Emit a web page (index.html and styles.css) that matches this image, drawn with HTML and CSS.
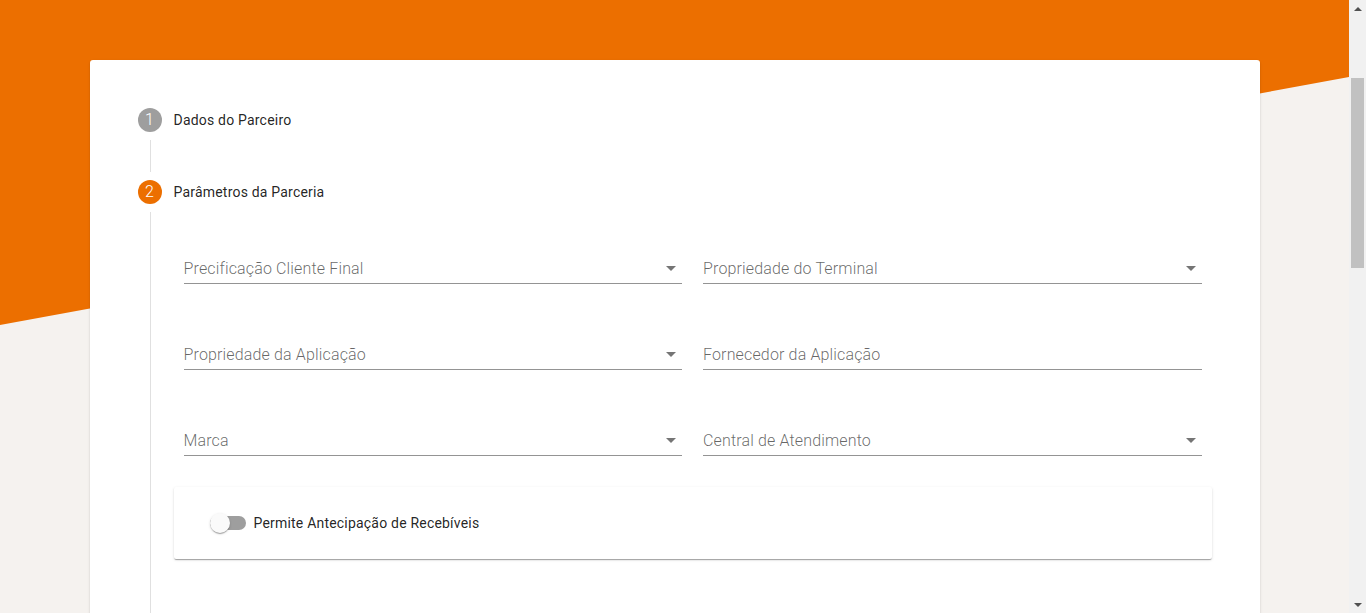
FILE: index.html
```html
<!DOCTYPE html>
<html lang="pt-BR">
<head>
<meta charset="utf-8">
<title>Parâmetros da Parceria</title>
<link rel="stylesheet" href="styles.css">
</head>
<body>
<div class="viewport">
  <div class="hero"></div>
  <main class="page">
    <section class="card">
      <div class="stepper">
        <div class="step-header first">
          <span class="step-icon done">1</span>
          <span class="step-label">Dados do Parceiro</span>
        </div>
        <div class="connector"></div>
        <div class="step-header second">
          <span class="step-icon active">2</span>
          <span class="step-label">Parâmetros da Parceria</span>
        </div>
        <div class="step-content">
          <div class="fields">
            <div class="field select"><span class="field-label">Precificação Cliente Final</span><span class="arrow"></span></div>
            <div class="field select"><span class="field-label">Propriedade do Terminal</span><span class="arrow"></span></div>
            <div class="field select"><span class="field-label">Propriedade da Aplicação</span><span class="arrow"></span></div>
            <div class="field"><span class="field-label">Fornecedor da Aplicação</span></div>
            <div class="field select"><span class="field-label">Marca</span><span class="arrow"></span></div>
            <div class="field select"><span class="field-label">Central de Atendimento</span><span class="arrow"></span></div>
          </div>
          <div class="toggle-card">
            <label class="toggle">
              <span class="toggle-bar"><span class="toggle-thumb"></span></span>
              <span class="toggle-label">Permite Antecipação de Recebíveis</span>
            </label>
          </div>
        </div>
      </div>
    </section>
  </main>
</div>
<div class="scrollbar">
  <span class="sb-btn"><span class="sb-up"></span></span>
  <span class="sb-track"><span class="sb-thumb"></span></span>
  <span class="sb-btn"><span class="sb-down"></span></span>
</div>
</body>
</html>
```
FILE: styles.css
```css
html, body {
  margin: 0;
  padding: 0;
}
body {
  background: #f5f2ef;
  font-family: Roboto, "Liberation Sans", Arial, sans-serif;
  color: rgba(0, 0, 0, 0.87);
}
.viewport {
  position: relative;
  margin-right: 17px;
}
.hero {
  position: absolute;
  top: 0;
  left: 0;
  right: 0;
  height: 325px;
  background: #ec6f00;
  clip-path: polygon(0 0, 100% 0, 100% 77px, 0 100%);
  z-index: 0;
}
.page {
  position: relative;
  z-index: 1;
  padding: 60px 0 28px;
}
.card {
  width: 1170px;
  margin: 0 auto;
  background: #fff;
  border-radius: 3px;
  box-shadow: 0 2px 1px -1px rgba(0,0,0,.2), 0 1px 1px 0 rgba(0,0,0,.14), 0 1px 3px 0 rgba(0,0,0,.12);
  min-height: 1780px;
  padding: 24px;
  box-sizing: border-box;
}
.stepper {
  display: flex;
  flex-direction: column;
}
.step-header {
  display: flex;
  align-items: center;
  padding: 24px 24px 8px;
  height: 24px;
}
.step-header.second {
  padding: 8px 24px 8px;
}
.step-icon {
  width: 24px;
  height: 24px;
  border-radius: 50%;
  color: #fff;
  font-size: 16px;
  font-weight: 300;
  line-height: 24px;
  text-align: center;
  flex: none;
}
.step-icon.done { background: #9e9e9e; }
.step-icon.active { background: #ec6f00; }
.step-label {
  margin-left: 12px;
  font-size: 14px;
  letter-spacing: 0.2px;
  color: rgba(0, 0, 0, 0.87);
}
.connector {
  margin-left: 36px;
  height: 32px;
  border-left: 1px solid #e0e0e0;
}
.step-content {
  margin-left: 36px;
  border-left: 1px solid #e0e0e0;
  padding: 0 24px 24px 23px;
  min-height: 1500px;
}
.fields {
  display: grid;
  grid-template-columns: 1fr 1fr;
  column-gap: 21px;
  row-gap: 61px;
  padding: 0 10px;
  margin-top: 47px;
}
.field {
  display: flex;
  align-items: center;
  height: 20px;
  padding-bottom: 4px;
  border-bottom: 1px solid #949494;
}
.field-label {
  flex: 1;
  font-size: 16px;
  font-weight: 300;
  letter-spacing: 0.15px;
  line-height: 20px;
  color: rgba(0, 0, 0, 0.6);
}
.arrow {
  width: 0;
  height: 0;
  border-left: 5px solid transparent;
  border-right: 5px solid transparent;
  border-top: 5px solid rgba(0, 0, 0, 0.54);
  margin: 0 6px 2px 0;
}
.toggle-card {
  margin-top: 31px;
  padding: 26px 24px 26px 36px;
  background: #fff;
  border-radius: 2px;
  box-shadow: 0 2px 1px -1px rgba(0,0,0,.2), 0 1px 1px 0 rgba(0,0,0,.14), 0 1px 3px 0 rgba(0,0,0,.12);
}
.toggle {
  display: flex;
  align-items: center;
  height: 20px;
}
.toggle-bar {
  position: relative;
  width: 36px;
  height: 14px;
  border-radius: 8px;
  background: #9e9e9e;
  flex: none;
}
.toggle-thumb {
  position: absolute;
  left: 0;
  top: -3px;
  width: 20px;
  height: 20px;
  border-radius: 50%;
  background: #fafafa;
  box-shadow: 0 2px 1px -1px rgba(0,0,0,.2), 0 1px 1px 0 rgba(0,0,0,.14), 0 1px 3px 0 rgba(0,0,0,.12);
}
.toggle-label {
  margin-left: 8px;
  font-size: 14px;
  letter-spacing: 0.2px;
  color: rgba(0, 0, 0, 0.87);
}

/* window scrollbar */
.scrollbar {
  position: fixed;
  top: 0;
  right: 0;
  bottom: 0;
  width: 17px;
  background: #f1f1f1;
  display: flex;
  flex-direction: column;
  z-index: 10;
}
.sb-btn {
  height: 17px;
  flex: none;
  display: flex;
  align-items: center;
  justify-content: center;
}
.sb-up {
  width: 0;
  height: 0;
  border-left: 4px solid transparent;
  border-right: 4px solid transparent;
  border-bottom: 4px solid #505050;
}
.sb-down {
  width: 0;
  height: 0;
  border-left: 4px solid transparent;
  border-right: 4px solid transparent;
  border-top: 4px solid #505050;
}
.sb-track {
  flex: 1;
  padding: 61px 2px 0;
}
.sb-thumb {
  display: block;
  height: 190px;
  background: #c1c1c1;
}
```
